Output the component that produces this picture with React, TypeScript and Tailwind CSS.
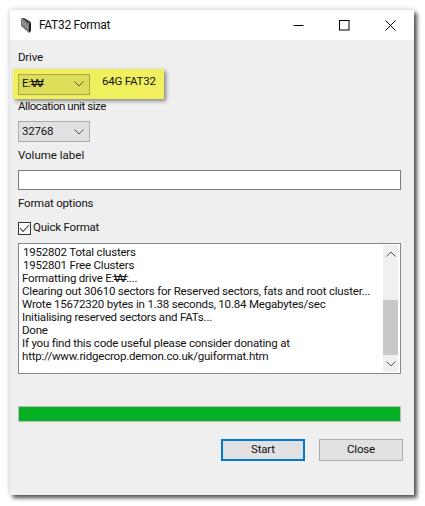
const Won = () => (
  <span className="inline-block w-[12px] text-center scale-x-125 font-['DejaVu_Sans',sans-serif] font-light text-[11px] leading-[6px]">₩</span>
);

const logLines = [
  "1952802 Total clusters",
  "1952801 Free Clusters",
  <>Formatting drive E:<Won />:...</>,
  "Clearing out 30610 sectors for Reserved sectors, fats and root cluster...",
  "Wrote 15672320 bytes in 1.38 seconds, 10.84 Megabytes/sec",
  "Initialising reserved sectors and FATs...",
  "Done",
  "If you find this code useful please consider donating at",
  "http://www.ridgecrop.demon.co.uk/guiformat.htm",
];

function Chevron({ className = "" }: { className?: string }) {
  return (
    <svg width="10" height="6" viewBox="0 0 10 6" fill="none" stroke="currentColor" className={className}>
      <path d="M0.5 0.5 L5 5 L9.5 0.5" />
    </svg>
  );
}

function DriveIcon() {
  return (
    <svg width="10" height="15" viewBox="0 0 10 15">
      <path d="M0 1 L1 0 L8 6 L8 15 L0 8 Z" fill="#777" />
      <path d="M8 6 L10 4 L10 13 L8 15 Z" fill="#222" />
      <path d="M1 0 L3 0 L10 4 L8 6 Z" fill="#333" />
      <path d="M1 3 L7 8 M1 5 L7 10" stroke="#a8a8a8" strokeWidth="1" />
    </svg>
  );
}

export default function App() {
  return (
    <div className="w-[425px] h-[506px] bg-white pt-[10px] pl-[10px] overflow-hidden font-['Roboto',sans-serif] text-[11.5px] tracking-[-0.2px] text-[#111]">
      <div className="w-[404px] h-[485px] bg-[#efefef] shadow-[3px_3px_4px_rgba(0,0,0,0.65),0_0_6px_rgba(0,0,0,0.2)] flex flex-col">
        {/* title bar */}
        <div className="h-[30px] bg-white flex items-center shrink-0">
          <div className="ml-[11px] w-[18px]">
            <DriveIcon />
          </div>
          <span className="text-[12px] tracking-[-0.3px]">FAT32 Format</span>
          <div className="ml-auto flex items-center gap-[35px] mr-[18px]">
            <svg width="11" height="11" viewBox="0 0 11 11" stroke="#000" fill="none">
              <path d="M0.5 5.5 H10.5" />
            </svg>
            <svg width="11" height="11" viewBox="0 0 11 11" stroke="#000" fill="none">
              <rect x="0.5" y="0.5" width="9.5" height="9.5" />
            </svg>
            <svg width="11" height="11" viewBox="0 0 11 11" stroke="#000" fill="none">
              <path d="M0.5 0.5 L10.5 10.5 M10.5 0.5 L0.5 10.5" />
            </svg>
          </div>
        </div>

        <div className="flex flex-col pl-[8px] pr-[13px] flex-1">
          <div className="mt-[9px] h-[16px] leading-[16px]">Drive</div>

          {/* highlighted drive row */}
          <div className="mt-[4px] -ml-[5px] w-[151px] h-[30px] bg-[#f0f05e] shadow-[2px_2px_4px_rgba(0,0,0,0.45)] flex items-center pl-[5px]">
            <div className="w-[72px] h-[21px] bg-[#dddd5a] border border-[#a8a84a] flex items-center pl-[3px] pr-[5px] justify-between">
              <span>E:<Won /></span>
              <Chevron className="text-[#55552a]" />
            </div>
            <span className="ml-[12px] -mt-[5px]">64G FAT32</span>
          </div>

          <div className="mt-[-1px] h-[16px] leading-[16px] tracking-[-0.45px]">Allocation unit size</div>
          <div className="mt-[7px] w-[72px] h-[21px] bg-[#e1e1e1] border border-[#adadad] flex items-center pl-[3px] pr-[5px] justify-between">
            <span>32768</span>
            <Chevron className="text-[#555]" />
          </div>

          <div className="mt-[5px] h-[16px] leading-[16px] tracking-normal">Volume label</div>
          <div className="mt-[7px] w-[383px] h-[20px] bg-white border border-[#7a7a7a]" />

          <div className="mt-[5px] h-[16px] leading-[16px]">Format options</div>

          <div className="mt-[10px] flex items-center h-[14px]">
            <div className="w-[13px] h-[13px] bg-white border border-[#333] flex items-center justify-center">
              <svg width="11" height="9" viewBox="0 0 11 9" fill="none" stroke="#333" strokeWidth="1.1">
                <path d="M1 4 L4 7.5 L10 1" />
              </svg>
            </div>
            <span className="ml-[2px]">Quick Format</span>
          </div>

          {/* log */}
          <div className="mt-[8px] w-[383px] h-[131px] bg-white border border-[#828790] flex">
            <div className="flex-1 pl-[3px] pt-[2px] whitespace-nowrap overflow-hidden">
              {logLines.map((line, i) => (
                <div key={i} className={`h-[13px] leading-[13px] ${i < 2 ? "pl-px" : ""}`}>{line}</div>
              ))}
            </div>
            <div className="w-[15px] mr-[2px] my-[1px] bg-[#f0f0f0] flex flex-col items-center justify-between">
              <div className="h-[55px] w-full flex flex-col items-center">
                <Chevron className="rotate-180 mt-[6px] text-[#555]" />
              </div>
              <div className="h-[55px] w-full bg-[#c8c8c8] mt-auto" />
              <div className="h-[17px] flex items-center">
                <Chevron className="text-[#555]" />
              </div>
            </div>
          </div>

          <div className="mt-[32px] w-[383px] h-[16px] bg-[#06b025] border border-[#bcbcbc]" />

          <div className="mt-[17px] flex justify-end gap-[14px] -mr-[2px]">
            <button className="w-[84px] h-[22px] bg-[#e1e1e1] border-2 border-[#0078d7] text-[11.5px]">Start</button>
            <button className="w-[84px] h-[22px] bg-[#e1e1e1] border border-[#adadad] text-[11.5px]">Close</button>
          </div>
        </div>
      </div>
    </div>
  );
}
